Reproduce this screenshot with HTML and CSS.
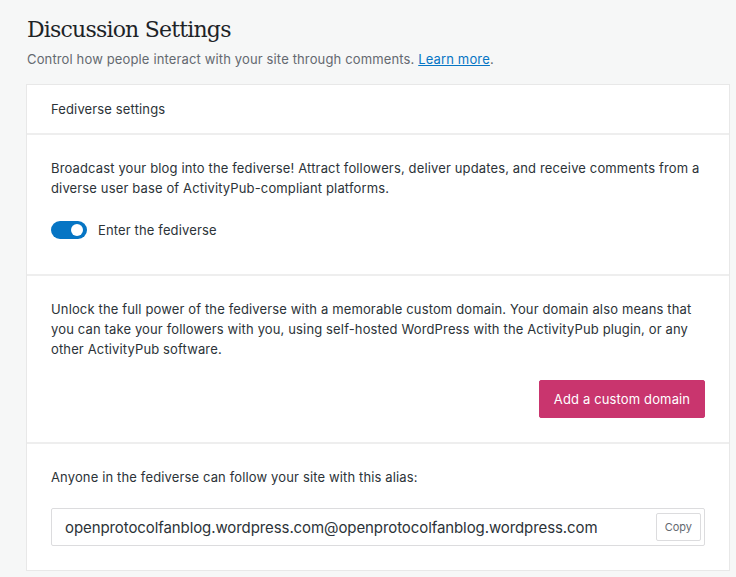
FILE: index.html
```html
<!DOCTYPE html>
<html lang="en">
<head>
<meta charset="utf-8">
<title>Discussion Settings</title>
<link rel="stylesheet" href="styles.css">
</head>
<body>
<main class="page">
  <header class="page-head">
    <h1 class="title">Discussion Settings</h1>
    <p class="subtitle">Control how people interact with your site through comments. <a href="#" class="link">Learn more</a>.</p>
  </header>
  <section class="card">
    <div class="card-head">Fediverse settings</div>
    <div class="card-section sec-enter">
      <p class="text">Broadcast your blog into the fediverse! Attract followers, deliver updates, and receive comments from a diverse user base of ActivityPub-compliant platforms.</p>
      <label class="toggle-row">
        <span class="toggle"><span class="knob"></span></span>
        <span class="toggle-label">Enter the fediverse</span>
      </label>
    </div>
    <div class="card-section sec-domain">
      <p class="text">Unlock the full power of the fediverse with a memorable custom domain. Your domain also means that you can take your followers with you, using self-hosted WordPress with the ActivityPub plugin, or any other ActivityPub software.</p>
      <div class="actions"><button class="btn-primary">Add a custom domain</button></div>
    </div>
    <div class="card-section sec-alias">
      <p class="text">Anyone in the fediverse can follow your site with this alias:</p>
      <div class="alias-box">
        <span class="alias">openprotocolfanblog.wordpress.com@openprotocolfanblog.wordpress.com</span>
        <button class="btn-copy">Copy</button>
      </div>
    </div>
  </section>
</main>
</body>
</html>
```
FILE: styles.css
```css
html, body {
  margin: 0;
  padding: 0;
  background: #f6f7f7;
}
body {
  font-family: "Inter", "Liberation Sans", sans-serif;
  color: #2c3338;
  letter-spacing: 0.14px;
}
.page {
  padding: 15px 6px 0 26px;
}
.page-head {
  margin-left: 1px;
}
.title {
  margin: 0;
  font-family: "DejaVu Serif", serif;
  font-weight: 400;
  font-size: 22px;
  line-height: 30px;
  color: #1d2327;
  letter-spacing: -0.8px;
}
.subtitle {
  margin: 4px 0 0;
  font-size: 13px;
  line-height: 20px;
  color: #646970;
}
.link {
  color: #0675c4;
  text-decoration: underline;
}
.card {
  margin-top: 15px;
  background: #fff;
  border: 1px solid #e8e8e8;
  width: 702px;
}
.card-head {
  padding: 14px 24px;
  font-size: 13px;
  line-height: 20px;
  color: #2c3338;
  border-bottom: 2px solid #eeeeee;
}
.card-section {
  padding: 23px 24px 24px;
  border-bottom: 2px solid #eeeeee;
}
.card-section:last-child {
  border-bottom: none;
}
.text {
  margin: 0;
  font-size: 13px;
  line-height: 20px;
  color: #2c3338;
}
.toggle-row {
  display: flex;
  align-items: center;
  gap: 11px;
  margin-top: 22px;
  margin-bottom: 10px;
}
.toggle {
  width: 36px;
  height: 18px;
  border-radius: 9px;
  background: #0675c4;
  position: relative;
  flex: none;
}
.knob {
  position: absolute;
  right: 4px;
  top: 3px;
  width: 12px;
  height: 12px;
  border-radius: 50%;
  background: #fff;
}
.toggle-label {
  font-size: 13px;
  line-height: 20px;
}
.actions {
  display: flex;
  justify-content: flex-end;
  margin-top: 21px;
}
.btn-primary {
  height: 38px;
  padding: 0;
  width: 166px;
  white-space: nowrap;
  background: #c9356e;
  color: #fff;
  border: 1px solid #c9356e;
  border-radius: 2px;
  font-family: inherit;
  font-size: 13px;
  letter-spacing: 0.14px;
}
.alias-box {
  margin-top: 21px;
  height: 38px;
  box-sizing: border-box;
  border: 1px solid #dcdcde;
  border-radius: 2px;
  display: flex;
  align-items: center;
  justify-content: space-between;
  padding: 0 3px 0 13px;
}
.alias {
  font-size: 15px;
  color: #2c3338;
  letter-spacing: -0.09px;
}
.btn-copy {
  height: 28px;
  padding: 0 8px;
  background: #fff;
  border: 1px solid #dcdcde;
  border-radius: 2px;
  font-family: inherit;
  font-size: 11px;
  letter-spacing: 0;
  color: #646970;
}
```
